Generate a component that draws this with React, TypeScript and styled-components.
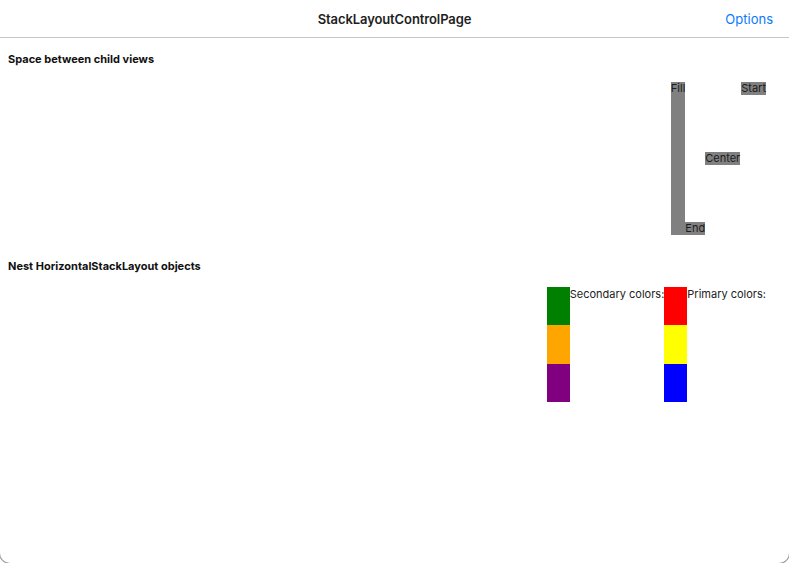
import React from "react";
import styled, { createGlobalStyle } from "styled-components";

const Global = createGlobalStyle`
  html, body { margin: 0; padding: 0; background: #fff; }
  body { font-family: Inter, "Liberation Sans", sans-serif; overflow: hidden; }
`;

const Frame = styled.div`
  width: 789px;
  height: 563px;
  box-sizing: border-box;
  border-radius: 0 0 10px 10px;
  box-shadow: 0 0 0 1px #9a9a9a;
  background: #fff;
  display: flex;
  flex-direction: column;
  overflow: hidden;
`;

const NavBar = styled.header`
  height: 37px;
  flex: 0 0 37px;
  border-bottom: 1px solid #c6c6c6;
  display: grid;
  grid-template-columns: 1fr auto 1fr;
  align-items: center;
  padding: 0 16px;
`;

const NavTitle = styled.div`
  grid-column: 2;
  font-size: 13px;
  font-weight: 600;
  color: #1e1e1e;
  letter-spacing: -0.1px;
`;

const NavAction = styled.div`
  grid-column: 3;
  justify-self: end;
  font-size: 13px;
  color: #0a7aff;
`;

const Content = styled.main`
  display: flex;
  flex-direction: column;
  padding: 0 23px 0 8px;
`;

const SectionTitle = styled.div<{ $top: number }>`
  margin-top: ${(p) => p.$top}px;
  font-size: 11px;
  line-height: 13px;
  font-weight: 700;
  color: #111;
`;

const AlignRow = styled.div`
  margin-top: 16px;
  height: 153px;
  display: flex;
  justify-content: flex-end;
`;

const AlignLabel = styled.div<{ $align: string }>`
  align-self: ${(p) => p.$align};
  background: #808080;
  color: #1c1c1c;
  font-size: 11px;
  line-height: 13px;
  margin-left: ${(p) => (p.$align === "flex-start" ? 1 : 0)}px;
`;

const ColorsRow = styled.div`
  margin-top: 14px;
  display: flex;
  justify-content: flex-end;
`;

const ColorGroup = styled.div`
  display: flex;
  align-items: flex-start;
`;

const Swatches = styled.div`
  display: flex;
  flex-direction: column;
  width: 23px;
`;

const Swatch = styled.div<{ $color: string }>`
  height: 38.4px;
  background: ${(p) => p.$color};
`;

const GroupLabel = styled.div`
  font-size: 11px;
  line-height: 13px;
  color: #222;
  padding-top: 1px;
`;

const groups = [
  { label: "Secondary colors:", colors: ["#008000", "#ffa500", "#800080"] },
  { label: "Primary colors:", colors: ["#ff0000", "#ffff00", "#0000ff"] },
];

export default function App() {
  return (
    <>
      <Global />
      <Frame>
        <NavBar>
          <NavTitle>StackLayoutControlPage</NavTitle>
          <NavAction>Options</NavAction>
        </NavBar>
        <Content>
          <SectionTitle $top={15}>Space between child views</SectionTitle>
          <AlignRow>
            <AlignLabel $align="stretch">Fill</AlignLabel>
            <AlignLabel $align="flex-end">End</AlignLabel>
            <AlignLabel $align="center">Center</AlignLabel>
            <AlignLabel $align="flex-start">Start</AlignLabel>
          </AlignRow>
          <SectionTitle $top={25}>Nest HorizontalStackLayout objects</SectionTitle>
          <ColorsRow>
            {groups.map((g) => (
              <ColorGroup key={g.label}>
                <Swatches>
                  {g.colors.map((c) => (
                    <Swatch key={c} $color={c} />
                  ))}
                </Swatches>
                <GroupLabel>{g.label}</GroupLabel>
              </ColorGroup>
            ))}
          </ColorsRow>
        </Content>
      </Frame>
    </>
  );
}
